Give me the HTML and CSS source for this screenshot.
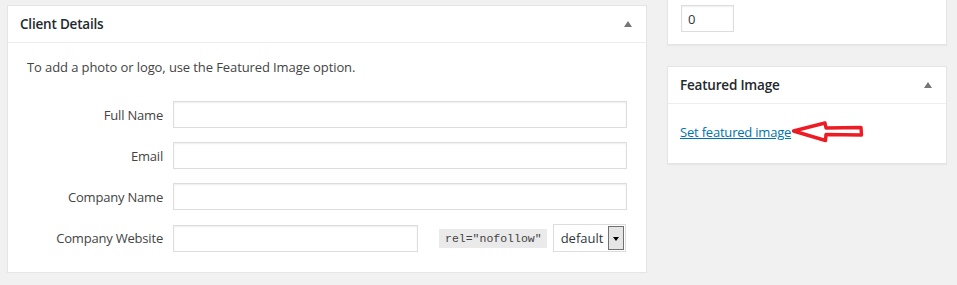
FILE: index.html
```html
<!DOCTYPE html>
<html lang="en">
<head>
  <meta charset="UTF-8" />
  <title>Edit Client</title>
  <link rel="stylesheet" href="styles.css">
</head>
<body>
  <div class="columns">

    <!-- Main column -->
    <div class="main-col">
      <div class="postbox">
        <div class="postbox-header">
          <h2>Client Details</h2>
          <span class="toggle"></span>
        </div>
        <div class="inside client-fields">
          <p class="hint">To add a photo or logo, use the Featured Image option.</p>

          <div class="field-row">
            <label for="full-name">Full Name</label>
            <input type="text" id="full-name">
          </div>
          <div class="field-row">
            <label for="email">Email</label>
            <input type="text" id="email">
          </div>
          <div class="field-row">
            <label for="company">Company Name</label>
            <input type="text" id="company">
          </div>
          <div class="field-row">
            <label for="website">Company Website</label>
            <input type="text" id="website" class="website-input">
            <code class="rel-code">rel="nofollow"</code>
            <div class="fake-select">
              <span>default</span>
              <span class="fake-select-btn"></span>
            </div>
          </div>
        </div>
      </div>
    </div>

    <!-- Sidebar -->
    <div class="side-col">
      <div class="postbox postbox-cut">
        <div class="inside order-box">
          <input type="text" class="small-input" value="0">
        </div>
      </div>

      <div class="postbox">
        <div class="postbox-header">
          <h2>Featured Image</h2>
          <span class="toggle"></span>
        </div>
        <div class="inside featured-box">
          <a href="#" class="set-image">Set featured image</a>
          <svg class="red-arrow" width="74" height="24" viewBox="0 0 74 24">
            <path d="M2.5 11 L34 3 L35 8 L70 7.5 L70.5 15 L35 14.5 L34.5 20.5 Z" fill="#fff" stroke="#ed1c24" stroke-width="3.4" stroke-linejoin="round"/>
          </svg>
        </div>
      </div>
    </div>

  </div>
</body>
</html>
```

FILE: styles.css
```css
/* Global settings */
* { box-sizing: border-box; }
body {
  margin: 0;
  background-color: #f1f1f1;
  color: #444;
  font-family: 'Open Sans', 'Noto Sans', sans-serif;
  font-size: 13px;
}

/* Two column layout */
.columns {
  display: flex;
  align-items: flex-start;
  padding-left: 7px;
}
.main-col {
  width: 640px;
  margin-top: 5px;
}
.side-col {
  width: 280px;
  margin-left: 20px;
}

/* Meta boxes */
.postbox {
  background: #fff;
  border: 1px solid #e5e5e5;
  box-shadow: 0 1px 1px rgba(0, 0, 0, 0.04);
}
.postbox-cut {
  border-top: none;
  margin-bottom: 21px;
}
.postbox-header {
  display: flex;
  align-items: center;
  justify-content: space-between;
  height: 37px;
  padding: 0 12px;
  border-bottom: 1px solid #eee;
}
.postbox-header h2 {
  margin: 0;
  font-size: 13.5px;
  font-weight: 600;
  color: #23282d;
  letter-spacing: -0.2px;
}

/* Collapse arrow */
.toggle {
  width: 0;
  height: 0;
  margin-right: 2px;
  border-left: 4.5px solid transparent;
  border-right: 4.5px solid transparent;
  border-bottom: 6px solid #72777c;
}

/* Client details form */
.client-fields {
  padding: 0 19px 20px 19px;
}
.hint {
  margin: 15px 0 25px;
  line-height: 18px;
  letter-spacing: -0.1px;
}
.field-row {
  display: flex;
  align-items: center;
  margin-bottom: 14px;
}
.field-row:last-child { margin-bottom: 0; }
.field-row label {
  flex: none;
  width: 136px;
  margin-right: 10px;
  text-align: right;
  letter-spacing: -0.2px;
}
.field-row input {
  flex: 1;
  min-width: 0;
  height: 27px;
  border: 1px solid #ddd;
  box-shadow: inset 0 1px 2px rgba(0, 0, 0, 0.07);
  font: inherit;
  color: #32373c;
}
.field-row .website-input {
  flex: none;
  width: 245px;
}
.rel-code {
  flex: none;
  margin-left: 21px;
  padding: 3px 5px 3px 6px;
  background: #eaeaea;
  color: #444;
  font-family: 'Liberation Mono', 'DejaVu Sans Mono', monospace;
  font-size: 11.5px;
}

/* Dropdown */
.fake-select {
  flex: none;
  display: flex;
  align-items: center;
  justify-content: space-between;
  width: 73px;
  height: 28px;
  margin-left: 6px;
  padding: 1px 1px 1px 7px;
  border: 1px solid #ddd;
  color: #32373c;
  font-size: 13px;
}
.fake-select-btn {
  position: relative;
  width: 16px;
  height: 100%;
  background: #e5e5e5;
  border: 1px solid #707070;
}
.fake-select-btn::after {
  content: "";
  position: absolute;
  left: 4px;
  top: 10px;
  border-left: 3.5px solid transparent;
  border-right: 3.5px solid transparent;
  border-top: 4px solid #000;
}

/* Sidebar boxes */
.order-box {
  padding: 5px 13px 12px;
}
.small-input {
  width: 53px;
  height: 27px;
  padding: 0 6px;
  border: 1px solid #ddd;
  box-shadow: inset 0 1px 2px rgba(0, 0, 0, 0.07);
  font: inherit;
  color: #32373c;
}
.featured-box {
  display: flex;
  align-items: center;
  height: 59px;
  padding: 0 12px 4px;
}
.set-image {
  color: #0073aa;
  text-decoration: underline;
  letter-spacing: -0.2px;
}
.red-arrow {
  margin-left: 0;
  margin-top: 1px;
}
```
